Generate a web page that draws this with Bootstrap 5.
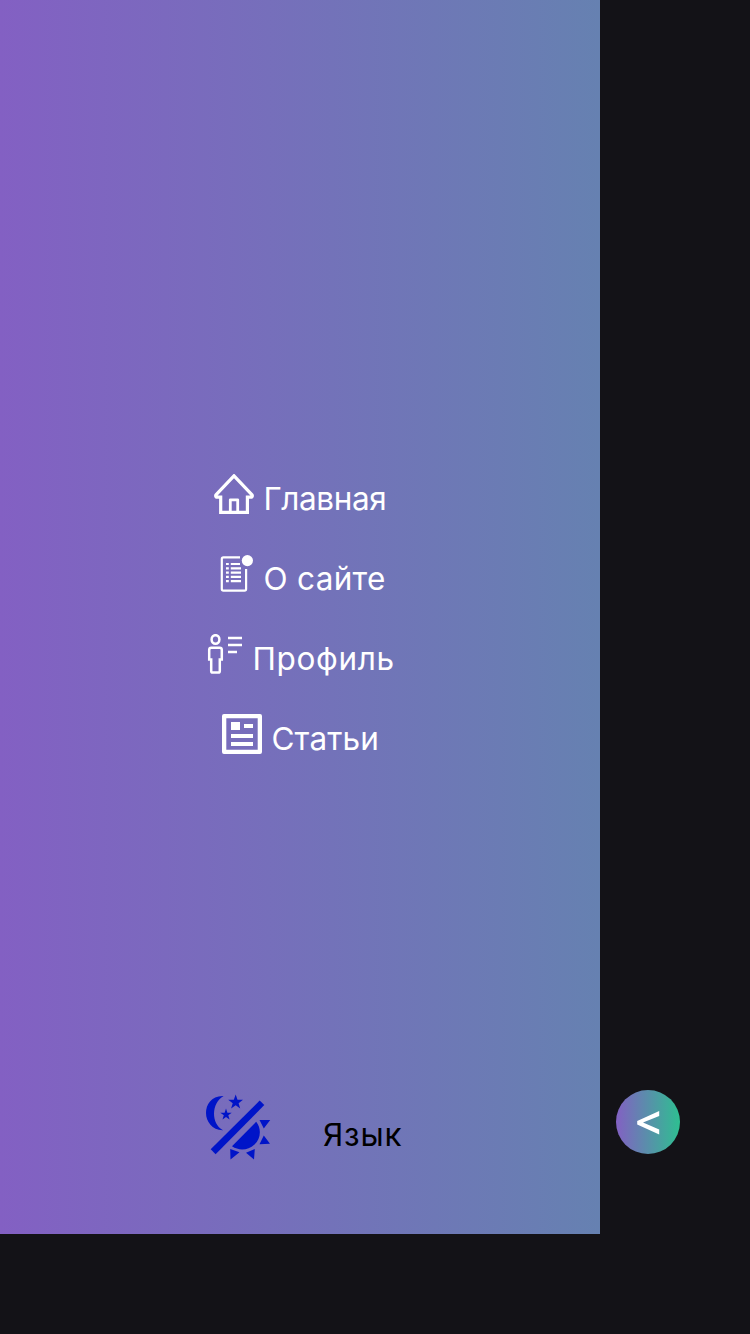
<!DOCTYPE html>
<html lang="ru">
<head>
<meta charset="utf-8">
<meta name="viewport" content="width=device-width, initial-scale=1">
<title>Меню</title>
<link rel="stylesheet" href="https://cdn.jsdelivr.net/npm/bootstrap@5.3.0/dist/css/bootstrap.min.css">
<style>
body{background:#131217;font-family:Inter,"Liberation Sans",sans-serif;font-size:31.5px;line-height:40px;height:1334px;overflow:hidden}
.side-menu{width:600px;height:1234px;background:linear-gradient(90deg,#8360c3,#6681b1);padding-top:474px;padding-bottom:74px}
.menu-link{height:40px;gap:8px}
.menu-link svg{width:40px;height:40px;flex:none}
.menu-link span{padding-top:5px;padding-left:1.5px;line-height:40px;white-space:nowrap}
.menu-list{gap:40px}
.label-home{width:124px;letter-spacing:-.4px}
.label-about{width:124px;letter-spacing:.3px}
.label-profile{width:146px;letter-spacing:.65px}
.label-articles{width:108px;letter-spacing:.1px}
.label-lang{padding-top:21px;letter-spacing:.8px}
.switches{padding-left:206px;gap:51px;height:66px}
.theme-icon{width:66px;height:66px;flex:none}
.toggle-btn{width:64px;height:64px;border-radius:50%;background:linear-gradient(90deg,#8360c3,#2ebf91);margin:1090px 0 0 16px}
</style>
</head>
<body>
<div class="d-flex align-items-start">
  <aside class="side-menu d-flex flex-column justify-content-between flex-shrink-0">
    <nav class="menu-list d-flex flex-column align-items-center">
      <a class="menu-link d-flex text-white text-decoration-none" href="#">
        <svg viewBox="0 0 40 40" fill="none" stroke="#fff" stroke-width="3.2" stroke-linejoin="round" stroke-linecap="round"><path d="M6.7 23.2H2.5Q1 22 2.2 20.6L20 1.8 37.8 20.6Q39 22 37.5 23.2H33.4V38.4H6.7Z" stroke-linejoin="miter"/><path d="M16.3 38V25.8H23.7V38" stroke-width="2.8"/></svg>
        <span class="label-home">Главная</span>
      </a>
      <a class="menu-link d-flex text-white text-decoration-none" href="#">
        <svg viewBox="0 0 40 40" fill="none" stroke="#fff" stroke-width="2.2"><path d="M26 3.4H9.4Q7.8 3.4 7.8 5V35Q7.8 36.6 9.4 36.6H30.5Q32.1 36.6 32.1 35V15"/><circle cx="33.4" cy="6.6" r="5.6" fill="#fff" stroke="none"/><path d="M12 10H14.8M12 14.3H14.8M12 18.6H14.8M12 22.9H14.8M12 27.2H14.8M16.8 10H26M16.8 14.3H27M16.8 18.6H27M16.8 22.9H27M16.8 27.2H27"/></svg>
        <span class="label-about">О сайте</span>
      </a>
      <a class="menu-link d-flex text-white text-decoration-none" href="#">
        <svg viewBox="0 0 40 40" fill="none" stroke="#fff" stroke-width="2.5"><ellipse cx="12.5" cy="5.5" rx="3.9" ry="4.3"/><path d="M8.3 13.7H16.7Q18.8 13.7 18.8 15.8V25.6H16.8V37Q16.8 38.6 15.2 38.6H9.8Q8.2 38.6 8.2 37V25.6H6.2V15.8Q6.2 13.7 8.3 13.7Z"/><path d="M25 4H39M25 11H39M25 18H34"/></svg>
        <span class="label-profile">Профиль</span>
      </a>
      <a class="menu-link d-flex text-white text-decoration-none" href="#">
        <svg viewBox="0 0 40 40" fill="#fff"><path fill-rule="evenodd" d="M2 0H38Q40 0 40 2V38Q40 40 38 40H2Q0 40 0 38V2Q0 0 2 0ZM4.3 4.3V35.7H35.7V4.3ZM9 8H18V16H9ZM22 10H31V14H22ZM9 20H31V24H9ZM9 28H31V32H9Z"/></svg>
        <span class="label-articles">Статьи</span>
      </a>
    </nav>
    <div class="switches d-flex">
      <svg class="theme-icon" viewBox="0 0 66 66" fill="#0014c8"><path d="M17.6 2C5.5 1.5 0 10.5 0 19S6.5 36.5 17 36.2C5 30 5 9 17.6 2Z"/><path d="M29.7 0.5 31.5 5.8H37L32.6 9.2 34.2 14.4 29.7 11.3 25.1 14.4 26.7 9.2 22.2 5.8H27.8Z"/><path d="M20 14.6 21.4 18.7H25.7L22.3 21.3 23.6 25.5 20 23 16.5 25.5 17.8 21.3 14.3 18.7H18.6Z"/><path d="M53.7 6.5 58.3 11.1 9.6 60.3 4.7 55.3Z"/><path d="M50.2 27.8C56 35 54.5 45 48.5 50.5C42 56.5 33 57 26 52.3Z"/><path d="M53.5 26H64.2L57.8 34.5ZM57.8 41.5 64 49.8 53.5 50.2ZM24.2 55 33.5 58.3 24.5 65.6ZM48.8 55 48 65.6 40 58.7Z"/></svg>
      <span class="label-lang text-black">Язык</span>
    </div>
  </aside>
  <button class="toggle-btn btn border-0 p-0 d-flex align-items-center justify-content-center" aria-label="Свернуть">
    <svg width="64" height="64" viewBox="0 0 64 64"><path d="M43.2 21V26L27 32.5 43.2 39.5V44.5L21.2 34.4V31Z" fill="#fff"/></svg>
  </button>
</div>
<script src="https://cdn.jsdelivr.net/npm/bootstrap@5.3.0/dist/js/bootstrap.bundle.min.js"></script>
</body>
</html>
